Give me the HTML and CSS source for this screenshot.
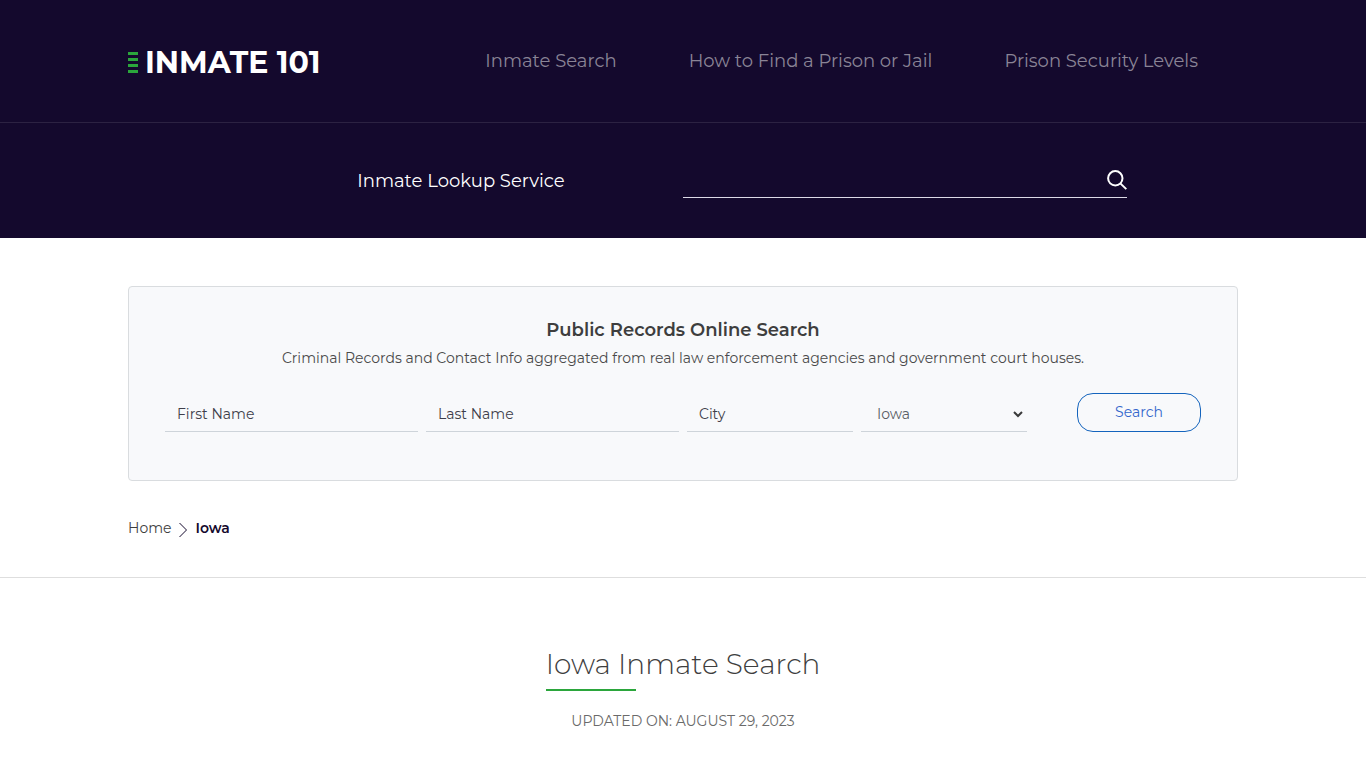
FILE: index.html
```
<!DOCTYPE html>
<html lang="en">
<head>
  <meta charset="UTF-8">
  <meta name="viewport" content="width=device-width, initial-scale=1.0">
  <title>Iowa Inmate Search</title>
  <link rel="stylesheet" href="styles.css">
</head>
<body>

  <header class="site-header">
    <div class="header-top">
      <div class="container header-row">
        <a class="logo" href="#">
          <svg width="10" height="22" viewBox="0 0 10 22" aria-hidden="true">
            <path fill="#2ba63c" d="M0 0h10v3H0zM0 6h10v3H0zM0 12h10v3H0zM0 18h10v3H0z"/>
          </svg>
          <span>INMATE 101</span>
        </a>
        <nav class="main-nav">
          <a href="#">Inmate Search</a>
          <a href="#">How to Find a Prison or Jail</a>
          <a href="#">Prison Security Levels</a>
        </nav>
      </div>
    </div>

    <div class="container">
      <form class="lookup">
        <label for="lookup">Inmate Lookup Service</label>
        <div class="lookup-field">
          <input type="text" id="lookup">
          <button type="button" aria-label="Search">
            <svg width="20" height="20" viewBox="0 0 20 20" fill="none" stroke="#fff" stroke-width="2" aria-hidden="true">
              <circle cx="8.3" cy="8.3" r="7.2"/>
              <path d="M13.6 13.6l5.7 5.5"/>
            </svg>
          </button>
        </div>
      </form>
    </div>
  </header>

  <main>
    <div class="container">
      <section class="records">
        <h2>Public Records Online Search</h2>
        <p>Criminal Records and Contact Info aggregated from real law enforcement agencies and government court houses.</p>
        <form class="records-form">
          <div class="field"><input type="text" placeholder="First Name" aria-label="First Name"></div>
          <div class="field"><input type="text" placeholder="Last Name" aria-label="Last Name"></div>
          <div class="field"><input type="text" placeholder="City" aria-label="City"></div>
          <div class="field">
            <select aria-label="State">
              <option>Iowa</option>
            </select>
            <svg class="chevron" width="10" height="7" viewBox="0 0 10 7" fill="none" stroke="#3a3a3a" stroke-width="2" aria-hidden="true">
              <path d="M1 1l4 4 4-4"/>
            </svg>
          </div>
          <div class="field field-submit"><button type="button">Search</button></div>
        </form>
      </section>

      <nav class="breadcrumb" aria-label="Breadcrumb">
        <a href="#">Home</a>
        <svg width="10" height="16" viewBox="0 0 10 16" fill="none" stroke="#14092d" aria-hidden="true">
          <path d="M1.5 1l7 7-7 7"/>
        </svg>
        <span>Iowa</span>
      </nav>
    </div>

    <section class="page-title">
      <h1>Iowa Inmate Search</h1>
      <p>UPDATED ON: AUGUST 29, 2023</p>
    </section>
  </main>

</body>
</html>
```
FILE: styles.css
```
* {
  box-sizing: border-box;
}

body {
  margin: 0;
  font-family: Montserrat, Inter, sans-serif;
  font-size: 14px;
  line-height: 20px;
  color: #3e3e3e;
  background: #fff;
}

h1, h2, p {
  margin: 0;
}

a {
  color: inherit;
  text-decoration: none;
}

input, select, button {
  font: inherit;
  color: inherit;
}

.container {
  width: calc(100% - 32px);
  max-width: 1110px;
  margin: 0 auto;
}

/* Header */
.site-header {
  background: #14092d;
  color: #fff;
}

.header-top {
  border-bottom: 1px solid #2c2242;
}

.header-row {
  display: flex;
  align-items: center;
  justify-content: space-between;
  min-height: 122px;
}

.logo {
  display: flex;
  align-items: center;
  gap: 7px;
  padding-top: 4px;
  font-size: 30px;
  line-height: 40px;
  font-weight: 700;
  white-space: nowrap;
}

.main-nav {
  display: flex;
  gap: 72px;
  padding-right: 40px;
  font-size: 18px;
  line-height: 24px;
  color: #8a8496;
}

.lookup {
  display: grid;
  grid-template-columns: 1fr 1fr;
  align-items: center;
  padding: 40px 10%;
  font-size: 18px;
}

.lookup label {
  text-align: center;
}

.lookup-field {
  display: flex;
  align-items: center;
  border-bottom: 1px solid #dcd9e6;
}

.lookup-field input {
  flex: 1;
  min-width: 0;
  height: 34px;
  padding: 0 8px;
  border: 0;
  background: none;
}

.lookup-field button {
  display: flex;
  padding: 0;
  border: 0;
  background: none;
  cursor: pointer;
}

/* Public records box */
.records {
  margin-top: 48px;
  padding: 32px 32px 48px;
  border: 1px solid #d9dcdf;
  border-radius: 4px;
  background: #f8f9fb;
  text-align: center;
}

.records h2 {
  font-size: 18px;
  line-height: 22px;
  font-weight: 600;
}

.records p {
  margin-top: 7px;
  color: #4a4a4a;
}

.records-form {
  display: grid;
  grid-template-columns: 3fr 3fr 2fr 2fr 2fr;
  margin-top: 25px;
}

.field {
  position: relative;
  padding: 0 4px;
}

.field input,
.field select {
  display: block;
  width: 100%;
  height: 39px;
  padding: 4px 12px 0;
  border: 0;
  border-bottom: 1px solid #ced4da;
  border-radius: 0;
  background: none;
}

.field select {
  appearance: none;
  padding-left: 16px;
  color: #5a5e66;
}

.field input::placeholder {
  color: #3e3e4a;
  opacity: 1;
}

.chevron {
  position: absolute;
  right: 8px;
  top: 18px;
  pointer-events: none;
}

.field-submit {
  padding-left: 46px;
}

.field-submit button {
  display: block;
  width: 100%;
  height: 39px;
  padding: 0 0 2px;
  border: 1px solid #1464bd;
  border-radius: 16px;
  background: none;
  color: #3366cc;
  cursor: pointer;
}

/* Breadcrumb */
.breadcrumb {
  display: flex;
  align-items: flex-end;
  gap: 7px;
  padding: 37px 0 39px;
}

.breadcrumb span {
  color: #14092d;
  font-weight: 600;
}

/* Page title */
.page-title {
  display: flex;
  flex-direction: column;
  align-items: center;
  padding: 66px 16px 40px;
  border-top: 1px solid #dedede;
}

.page-title h1 {
  font-size: 28px;
  line-height: 40px;
  font-weight: 300;
}

.page-title h1::after {
  content: "";
  display: block;
  width: 90px;
  height: 2px;
  margin-top: 5px;
  background: #2ba63c;
}

.page-title p {
  margin-top: 20px;
  color: #6a6a6a;
}
```
